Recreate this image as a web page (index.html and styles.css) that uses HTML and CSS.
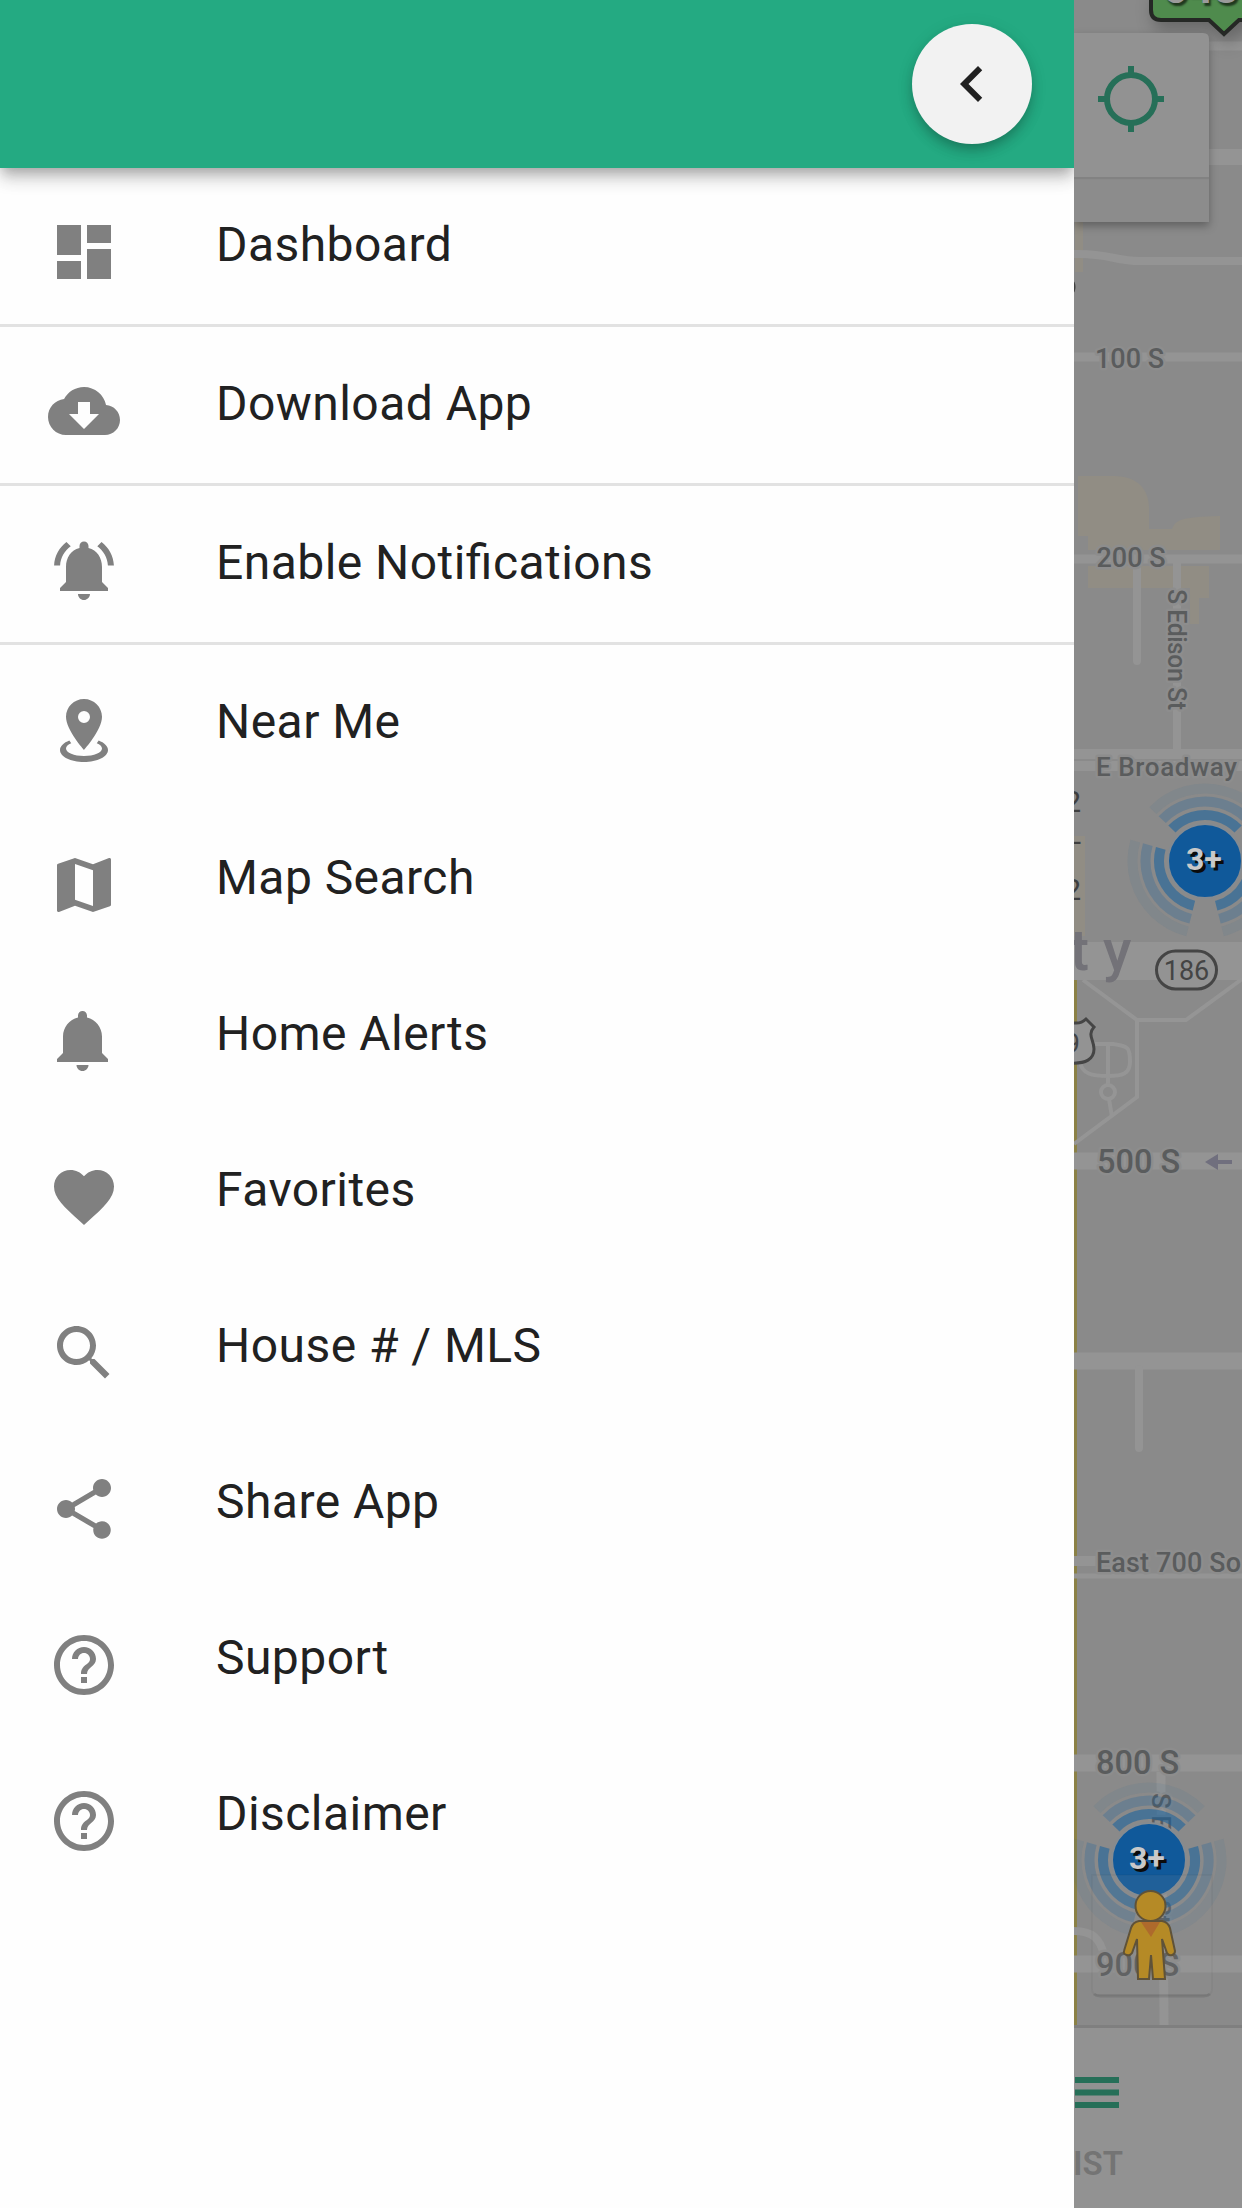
FILE: index.html
```html
<!DOCTYPE html>
<html lang="en">
<head>
<meta charset="UTF-8" />
<meta name="viewport" content="width=device-width, initial-scale=1" />
<title>Menu</title>
<link rel="stylesheet" href="styles.css">
</head>
<body>

<div class="app">
  <nav class="drawer">
    <header class="drawer-header">
      <button class="close-btn" aria-label="Close menu">
        <svg class="icon" viewBox="0 0 24 24"><path d="M15.41 7.41L14 6l-6 6 6 6 1.41-1.41L10.83 12z"/></svg>
      </button>
    </header>

    <ul class="menu">
      <li class="menu-item divider">
        <svg class="icon" viewBox="0 0 24 24"><path d="M3 13h8V3H3v10zm0 8h8v-6H3v6zm10 0h8V11h-8v10zm0-18v6h8V3h-8z"/></svg>
        <span>Dashboard</span>
      </li>
      <li class="menu-item divider">
        <svg class="icon" viewBox="0 0 24 24"><path d="M19.35 10.04C18.67 6.59 15.64 4 12 4 9.11 4 6.6 5.64 5.35 8.04 2.34 8.36 0 10.91 0 14c0 3.31 2.69 6 6 6h13c2.76 0 5-2.24 5-5 0-2.64-2.05-4.78-4.65-4.96zM17 13l-5 5-5-5h3V9h4v4h3z"/></svg>
        <span>Download App</span>
      </li>
      <li class="menu-item divider">
        <svg class="icon" viewBox="0 0 24 24"><path d="M7.58 4.08L6.15 2.65C3.75 4.48 2.17 7.3 2.03 10.5h2c.15-2.65 1.51-4.97 3.55-6.42zm12.39 6.42h2c-.15-3.2-1.73-6.02-4.12-7.85l-1.42 1.43c2.02 1.45 3.39 3.77 3.54 6.42zM18 11c0-3.07-1.64-5.64-4.5-6.32V4c0-.83-.67-1.5-1.5-1.5s-1.5.67-1.5 1.5v.68C7.63 5.36 6 7.92 6 11v5l-2 2v1h16v-1l-2-2v-5zm-6 11c.14 0 .27-.01.4-.04.65-.14 1.18-.58 1.44-1.18.1-.24.15-.5.15-.78h-4c.01 1.1.9 2 2.01 2z"/></svg>
        <span>Enable Notifications</span>
      </li>
      <li class="menu-item">
        <svg class="icon" viewBox="0 0 24 24"><path d="M12 2C15.31 2 18 4.66 18 7.95C18 12.41 12 19 12 19S6 12.41 6 7.95C6 4.66 8.69 2 12 2M12 6A2 2 0 0 0 10 8A2 2 0 0 0 12 10A2 2 0 0 0 14 8A2 2 0 0 0 12 6M20 19C20 21.21 16.42 23 12 23C7.58 23 4 21.21 4 19C4 17.71 5.22 16.56 7.11 15.83L7.75 16.74C6.67 17.19 6 17.81 6 18.5C6 19.88 8.69 21 12 21C15.31 21 18 19.88 18 18.5C18 17.81 17.33 17.19 16.25 16.74L16.89 15.83C18.78 16.56 20 17.71 20 19Z"/></svg>
        <span>Near Me</span>
      </li>
      <li class="menu-item">
        <svg class="icon" viewBox="0 0 24 24"><path d="M20.5 3l-.16.03L15 5.1 9 3 3.36 4.9c-.21.07-.36.25-.36.48V20.5c0 .28.22.5.5.5l.16-.03L9 18.9l6 2.1 5.64-1.9c.21-.07.36-.25.36-.48V3.5c0-.28-.22-.5-.5-.5zM15 19l-6-2.11V5l6 2.11V19z"/></svg>
        <span>Map Search</span>
      </li>
      <li class="menu-item">
        <svg class="icon" viewBox="0 0 24 24"><path d="M11.5 22c1.1 0 2-.9 2-2h-4c0 1.1.9 2 2 2zm6.5-6v-5.5c0-3.07-2.13-5.64-5-6.32V3.5c0-.83-.67-1.5-1.5-1.5S10 2.67 10 3.5v.68c-2.87.68-5 3.25-5 6.32V16l-2 2v1h17v-1l-2-2z"/></svg>
        <span>Home Alerts</span>
      </li>
      <li class="menu-item">
        <svg class="icon" viewBox="0 0 24 24"><path d="M12 21.35l-1.45-1.32C5.4 15.36 2 12.28 2 8.5 2 5.42 4.42 3 7.5 3c1.74 0 3.41.81 4.5 2.09C13.09 3.81 14.76 3 16.5 3 19.58 3 22 5.42 22 8.5c0 3.78-3.4 6.86-8.55 11.54L12 21.35z"/></svg>
        <span>Favorites</span>
      </li>
      <li class="menu-item">
        <svg class="icon" viewBox="0 0 24 24"><path d="M15.5 14h-.79l-.28-.27C15.41 12.59 16 11.11 16 9.5 16 5.91 13.09 3 9.5 3S3 5.91 3 9.5 5.91 16 9.5 16c1.61 0 3.09-.59 4.23-1.57l.27.28v.79l5 4.99L20.49 19l-4.99-5zm-6 0C7.01 14 5 11.99 5 9.5S7.01 5 9.5 5 14 7.01 14 9.5 11.99 14 9.5 14z"/></svg>
        <span>House # / MLS</span>
      </li>
      <li class="menu-item">
        <svg class="icon" viewBox="0 0 24 24"><path d="M18 16.08c-.76 0-1.44.3-1.96.77L8.91 12.7c.05-.23.09-.46.09-.7s-.04-.47-.09-.7l7.05-4.11c.54.5 1.25.81 2.04.81 1.66 0 3-1.34 3-3s-1.34-3-3-3-3 1.34-3 3c0 .24.04.47.09.7L8.04 9.81C7.5 9.31 6.79 9 6 9c-1.66 0-3 1.34-3 3s1.34 3 3 3c.79 0 1.5-.31 2.04-.81l7.12 4.16c-.05.21-.08.43-.08.65 0 1.61 1.31 2.92 2.92 2.92 1.61 0 2.92-1.31 2.92-2.92s-1.31-2.92-2.92-2.92z"/></svg>
        <span>Share App</span>
      </li>
      <li class="menu-item">
        <svg class="icon" viewBox="0 0 24 24"><path d="M11 18h2v-2h-2v2zm1-16C6.48 2 2 6.48 2 12s4.48 10 10 10 10-4.48 10-10S17.52 2 12 2zm0 18c-4.41 0-8-3.59-8-8s3.59-8 8-8 8 3.59 8 8-3.59 8-8 8zm0-14c-2.21 0-4 1.79-4 4h2c0-1.1.9-2 2-2s2 .9 2 2c0 2-3 1.75-3 5h2c0-2.25 3-2.5 3-5 0-2.21-1.79-4-4-4z"/></svg>
        <span>Support</span>
      </li>
      <li class="menu-item">
        <svg class="icon" viewBox="0 0 24 24"><path d="M11 18h2v-2h-2v2zm1-16C6.48 2 2 6.48 2 12s4.48 10 10 10 10-4.48 10-10S17.52 2 12 2zm0 18c-4.41 0-8-3.59-8-8s3.59-8 8-8 8 3.59 8 8-3.59 8-8 8zm0-14c-2.21 0-4 1.79-4 4h2c0-1.1.9-2 2-2s2 .9 2 2c0 2-3 1.75-3 5h2c0-2.25 3-2.5 3-5 0-2.21-1.79-4-4-4z"/></svg>
        <span>Disclaimer</span>
      </li>
    </ul>
  </nav>

  <main class="page">
    <svg class="map" viewBox="1074 0 168 2025">
      <!-- buildings -->
      <g class="building">
        <path d="M1078 476h36c24 0 35 14 35 32v21h23c4-9 8-12 48-13v34h-132v-14h-10z"/>
        <path d="M1088 566h121v32h-10v26h-9v-36h-102z"/>
        <path d="M1075 222h8v50h-8zM1074 836h11v100h-11z"/>
      </g>

      <!-- yellow highway along the edge -->
      <path class="highway" d="M1075.5 980V2025"/>

      <!-- roads -->
      <g class="road">
        <path stroke-width="9" d="M1074 46h168"/>
        <path stroke-width="16" d="M1074 157h168"/>
        <path stroke-width="8" d="M1074 254c35-1 40 7 66 7h102"/>
        <path stroke-width="9" d="M1074 357h168M1074 559h168"/>
        <path stroke-width="8" stroke-linecap="round" d="M1137 566v95"/>
        <path stroke-width="8" d="M1177 560v190"/>
        <path stroke-width="10" d="M1074 754h168M1074 766h168"/>
        <path stroke-width="38" d="M1074 961h168"/>
        <path stroke-width="17" d="M1074 1161h168M1074 1361h168"/>
        <path stroke-width="8" stroke-linecap="round" d="M1139 1369v79"/>
        <path stroke-width="10" d="M1074 1561h22"/>
        <path stroke-width="5" d="M1074 1576h168"/>
        <path stroke-width="17" d="M1074 1763h168M1074 1964h168"/>
        <path stroke-width="9" d="M1161 1772c0 100 3 180 3 253"/>
        <path stroke-width="8" d="M1074 1931c18 0 26 7 30 24"/>
      </g>

      <!-- park paths -->
      <g class="trail">
        <path d="M1083 980l54 40h49l56-41M1137 1020v77l-63 47"/>
        <path d="M1093 1044h20c16 2 17 4 17 18 0 12-8 14-22 14-16 0-26-2-28-14M1108 1044v41M1109 1099l3 18"/>
        <circle cx="1108" cy="1092" r="7"/>
      </g>

      <!-- street names -->
      <g class="label">
        <text x="1095" y="368" font-size="27">100 S</text>
        <text x="1096.500" y="567" font-size="27">200 S</text>
        <text transform="translate(1168 589) rotate(90)" font-size="25" textLength="121">S Edison St</text>
        <text x="1096" y="776" font-size="26" textLength="141">E Broadway</text>
        <text x="1097" y="1173" font-size="32.500">500 S</text>
        <text x="1096" y="1572" font-size="27" textLength="145">East 700 So</text>
        <text x="1096" y="1774" font-size="32.500">800 S</text>
        <text transform="translate(1152 1793) rotate(90)" font-size="26">S Edison St</text>
        <text x="1096" y="1976" font-size="32.500">900 S</text>
      </g>
      <g class="cut-label">
        <text x="1081" y="812">2</text>
        <text x="1081" y="852">-</text>
        <text x="1081" y="900">2</text>
        <ellipse cx="1073" cy="287" rx="2.5" ry="6"/>
      </g>
      <text class="city" x="1089" y="970" text-anchor="end">t</text>
      <text class="city" x="1103" y="970">y</text>

      <!-- route shields -->
      <rect class="shield" x="1156.500" y="951" width="60" height="38" rx="19"/>
      <text class="shield-text" x="1186.500" y="980" text-anchor="middle">186</text>
      <path class="shield" d="M1070 1022c6 2 12 1 16-3l8 8c-7 8 0 13 0 22 0 10-8 15-24 14"/>
      <text class="shield-text" x="1080" y="1053" text-anchor="end">9</text>

      <path class="one-way" d="M1205 1162l13-8v6h14v4h-14v6z"/>

      <!-- price bubble -->
      <path class="price-bubble" d="M1151-8v18q0 10 10 10h48l15 14 15-14h10V-8z"/>
      <text class="price" x="1163" y="3">548</text>

      <!-- locate card -->
      <g class="card">
        <path d="M1074 33h129q6 0 6 6v183h-135z" fill="#929292"/>
      </g>
      <path fill="#8c8c8c" d="M1074 180h135v42h-135z"/>
      <path fill="#828282" d="M1074 177h135v2.500h-135z"/>
      <g class="locate">
        <circle cx="1131" cy="99" r="24"/>
        <path d="M1131 66v8M1131 124v8M1098 99h8M1156 99h8"/>
      </g>

      <!-- cluster markers -->
      <g class="cluster" transform="translate(1205 861)">
        <circle class="ring ring-3" r="72.500" pathLength="360"/>
        <circle class="ring ring-2" r="59.500" pathLength="360"/>
        <circle class="ring ring-1" r="46" pathLength="360"/>
        <circle class="cluster-dot" r="37"/>
        <text x="-19" y="9">3+</text>
      </g>
      <g class="cluster" transform="translate(1149 1860)">
        <circle class="ring ring-3" r="72.500" pathLength="360"/>
        <circle class="ring ring-2" r="59.500" pathLength="360"/>
        <circle class="ring ring-1" r="46" pathLength="360"/>
        <circle class="cluster-dot" r="37"/>
        <text x="-20" y="9">3+</text>
      </g>

      <!-- street view control -->
      <path class="pegman-card" d="M1092 1875h120v114q0 6-6 6h-108q-6 0-6-6z"/>
      <path class="pegman-edge" d="M1094 1994q2 2 6 2h104q4 0 6-2"/>
      <g class="pegman">
        <path d="M1139 1921h23q6 1 8 7l5 23q0 3-3 4-3 1-5-2l-5-14 3 40h-12l-2-24-2 24h-11l-1-40-5 14q-2 3-5 2-4-1-3-4l7-23q2-6 8-7z"/>
        <path class="scarf" d="M1141 1922h19l-9 15z"/>
        <circle cx="1150.500" cy="1906" r="15"/>
      </g>
    </svg>

    <footer class="tab-bar">
      <svg class="list-icon" viewBox="0 0 44 32"><path d="M0 0h44v6H0zM0 12.500h44v6H0zM0 25h44v6H0z"/></svg>
      <span class="tab-label">LIST</span>
    </footer>
  </main>
</div>

</body>
</html>
```
FILE: styles.css
```css
/* Reset */
* {
  margin: 0; padding: 0; box-sizing: border-box;
}
html, body {
  height: 100%;
  background: #fff;
  font-family: Roboto, "Liberation Sans", sans-serif;
  overflow: hidden;
}
.app {
  display: flex;
  width: 1242px;
  height: 2208px;
}

/* Drawer */
.drawer {
  width: 1074px;
  background: #fefefe;
  overflow: hidden;
}
.drawer-header {
  height: 168px;
  display: flex;
  justify-content: flex-end;
  align-items: center;
  padding-right: 42px;
  background: #24aa82;
  box-shadow: 0 6px 12px -3px rgba(0, 0, 0, 0.25), 0 12px 15px 0 rgba(0, 0, 0, 0.14), 0 3px 30px 0 rgba(0, 0, 0, 0.05);
}
.close-btn {
  width: 120px;
  height: 120px;
  display: flex;
  justify-content: center;
  align-items: center;
  border: none;
  border-radius: 50%;
  background: #f2f2f2;
  color: #212121;
  box-shadow: 0 6px 12px -3px rgba(0, 0, 0, 0.18), 0 8px 14px 0 rgba(0, 0, 0, 0.1), 0 3px 18px 0 rgba(0, 0, 0, 0.08);
}
.icon {
  width: 72px;
  height: 72px;
  flex: none;
  fill: currentColor;
}
.menu {
  list-style: none;
}
.menu-item {
  height: 156px;
  display: flex;
  align-items: flex-start;
  gap: 96px;
  padding: 48px 48px 0;
  color: #808080;
}
.menu-item span {
  color: #212121;
  font-size: 48px;
  line-height: 58px;
  letter-spacing: 0.45px;
  font-feature-settings: "liga" 1;
}
.divider {
  height: 159px;
  border-bottom: 3px solid #e2e2e2;
}

/* Page behind the drawer, dimmed */
.page {
  width: 168px;
  display: flex;
  flex-direction: column;
  overflow: hidden;
  background: #929292;
}
.map {
  width: 168px;
  height: 2025px;
  flex: none;
  background: #8a8a8a;
}
.building {
  fill: #918d84;
}
.road {
  fill: none;
  stroke: #949494;
}
.highway {
  fill: none;
  stroke: #8b8146;
  stroke-width: 3;
}
.trail {
  fill: none;
  stroke: #959595;
  stroke-width: 4;
}
.label {
  fill: #5a5c5d;
  font-weight: 500;
  stroke: #8d8d8d;
  stroke-width: 5;
  stroke-linejoin: round;
  paint-order: stroke;
}
.cut-label {
  fill: #3f3f3f;
  font-size: 30px;
  text-anchor: end;
}
.city {
  fill: #737278;
  font-size: 58px;
  font-weight: 500;
}
.shield {
  fill: #939393;
  stroke: #454545;
  stroke-width: 3;
}
.shield-text {
  fill: #444;
  font-size: 27px;
}
.one-way {
  fill: #706f7e;
}
.price-bubble {
  fill: #4f8b4d;
  stroke: #252825;
  stroke-width: 4;
  filter: drop-shadow(4px 8px 8px rgba(0, 0, 0, 0.25));
}
.price {
  fill: #9b9b9b;
  font-size: 44px;
  font-weight: 700;
  text-shadow: 2px 3px 2px rgba(0, 0, 0, 0.6);
}
.card {
  filter: drop-shadow(0 4px 4px rgba(0, 0, 0, 0.3));
}
.locate {
  fill: none;
  stroke: #266f58;
  stroke-width: 6;
}

.cluster text {
  fill: #c9c9c9;
  font-size: 32px;
  font-weight: 700;
  text-shadow: 3px 3px 0 #0b0b0b;
}
.cluster-dot {
  fill: #10599a;
  stroke: #858b91;
  stroke-width: 2;
}
.ring {
  fill: none;
  stroke: #14609f;
  stroke-width: 10;
  stroke-dasharray: 92 28;
  transform: rotate(-16deg);
}
.ring-1 { opacity: 0.55; }
.ring-2 { opacity: 0.25; }
.ring-3 { opacity: 0.08; }

.pegman-card {
  fill: rgba(146, 146, 146, 0.12);
  stroke: rgba(0, 0, 0, 0.03);
  stroke-width: 2;
}
.pegman-edge {
  fill: none;
  stroke: rgba(0, 0, 0, 0.1);
  stroke-width: 3;
}
.pegman {
  fill: #b58a26;
  stroke: #5f5238;
  stroke-width: 2;
}
.pegman .scarf {
  fill: #ae6a2c;
  stroke: none;
}

/* Bottom tab */
.tab-bar {
  flex: 1;
  display: flex;
  flex-direction: column;
  align-items: flex-start;
  padding: 49px 0 0 1px;
  border-top: 3px solid #7f7f7f;
}
.list-icon {
  width: 44px;
  height: 32px;
  fill: #266f58;
}
.tab-label {
  width: 48px;
  display: flex;
  justify-content: flex-end;
  margin-top: 36px;
  color: #747474;
  font-size: 33px;
  font-weight: 600;
  line-height: 38px;
}
```
